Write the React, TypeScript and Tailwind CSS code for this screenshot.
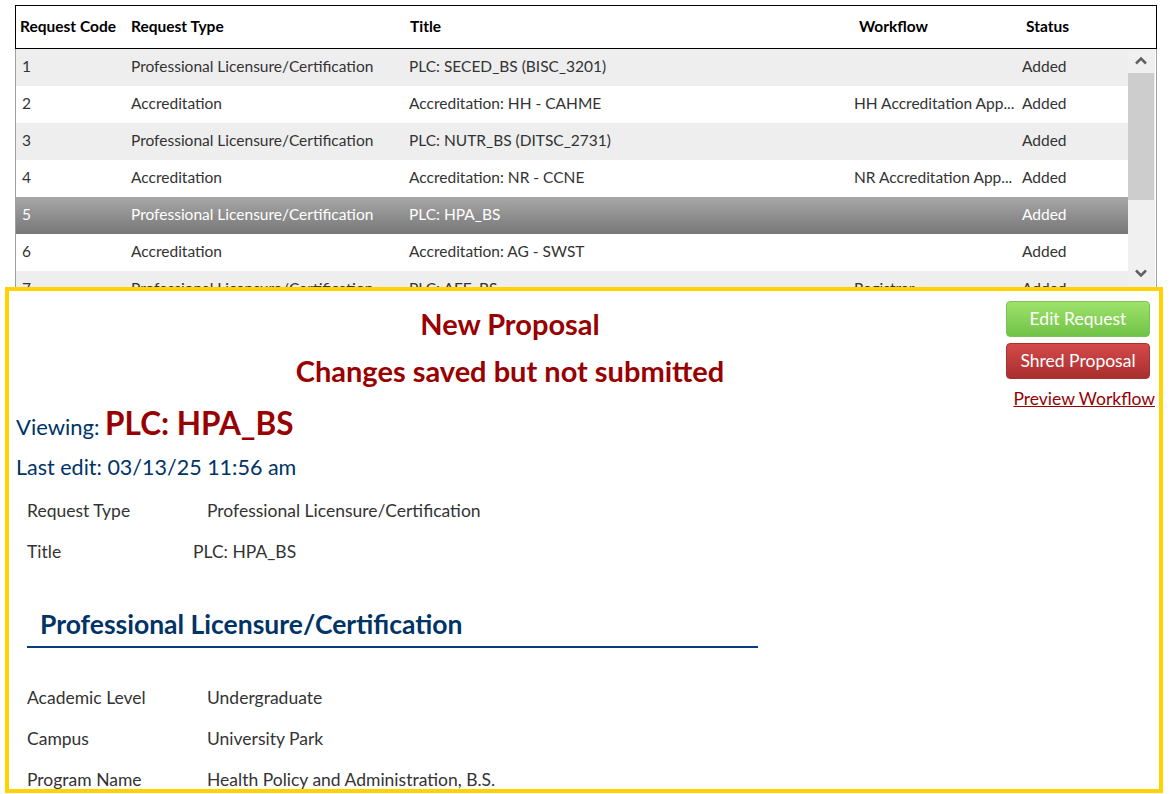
import React from "react";

type Row = { code: string; type: string; title: string; workflow: string; status: string };

const rows: Row[] = [
  { code: "1", type: "Professional Licensure/Certification", title: "PLC: SECED_BS (BISC_3201)", workflow: "", status: "Added" },
  { code: "2", type: "Accreditation", title: "Accreditation: HH - CAHME", workflow: "HH Accreditation App...", status: "Added" },
  { code: "3", type: "Professional Licensure/Certification", title: "PLC: NUTR_BS (DITSC_2731)", workflow: "", status: "Added" },
  { code: "4", type: "Accreditation", title: "Accreditation: NR - CCNE", workflow: "NR Accreditation App...", status: "Added" },
  { code: "5", type: "Professional Licensure/Certification", title: "PLC: HPA_BS", workflow: "", status: "Added" },
  { code: "6", type: "Accreditation", title: "Accreditation: AG - SWST", workflow: "", status: "Added" },
  { code: "7", type: "Professional Licensure/Certification", title: "PLC: AEE_BS", workflow: "Registrar...", status: "Added" },
];

const font = { fontFamily: "Lato, 'Open Sans', sans-serif" };

function Field({ label, value, valueClass = "pl-[180px]" }: { label: string; value: string; valueClass?: string }) {
  return (
    <div className="flex h-[41px] items-center pl-[18px] text-[17.5px] text-[#333333]">
      <div className="w-0 whitespace-nowrap">{label}</div>
      <div className={valueClass + " whitespace-nowrap"}>{value}</div>
    </div>
  );
}

export default function App() {
  return (
    <div className="h-[794px] w-[1172px] overflow-hidden bg-white" style={font}>
      {/* Table */}
      <div className="ml-[15px] pt-[5px]">
        <div className="h-[282px] w-[1142px] overflow-hidden">
          <div className="flex h-[44px] items-center border border-black bg-white text-[15.5px] font-bold text-black">
            <div className="w-[111px] pl-[4px]">Request Code</div>
            <div className="w-[279px] pl-[4px]">Request Type</div>
            <div className="w-[447px] pl-[4px]">Title</div>
            <div className="w-[167px] pl-[6px]">Workflow</div>
            <div className="w-[111px] pl-[6px]">Status</div>
          </div>
          <div className="flex border-x border-[#a0a0a0]">
            <div className="w-[1112px]">
              {rows.map((r, i) => {
                const sel = r.code === "5";
                const bg = sel ? "bg-gradient-to-b from-[#a8a8a8] to-[#777777] text-white" : i % 2 === 0 ? "bg-[#eeeeee] text-[#333333]" : "bg-white text-[#333333]";
                return (
                  <div key={r.code} className={"flex h-[37px] items-center pb-[2px] text-[15.5px] " + bg}>
                    <div className="w-[111px] pl-[6px]">{r.code}</div>
                    <div className="w-[279px] pl-[4px] whitespace-nowrap">{r.type}</div>
                    <div className="w-[445px] pl-[3px] whitespace-nowrap">{r.title}</div>
                    <div className="w-[167px] pl-[3px] whitespace-nowrap">{r.workflow}</div>
                    <div className="w-[110px] pl-[4px]">{r.status}</div>
                  </div>
                );
              })}
            </div>
            <div className="relative w-[27px] bg-[#f0f0f0]">
              <svg className="absolute left-[7px] top-[7px]" width="12" height="9" viewBox="0 0 12 9">
                <path d="M1 7.5 L6 2.5 L11 7.5" fill="none" stroke="#606060" strokeWidth="2.5" />
              </svg>
              <div className="absolute left-0 top-[24px] h-[127px] w-[26px] bg-[#cdcdcd]" />
              <svg className="absolute left-[7px] top-[220px]" width="12" height="9" viewBox="0 0 12 9">
                <path d="M1 1.5 L6 6.5 L11 1.5" fill="none" stroke="#606060" strokeWidth="2.5" />
              </svg>
            </div>
          </div>
        </div>
      </div>

      {/* Detail panel */}
      <div className="ml-[5px] h-[506px] w-[1158px] border-[4px] border-[#ffd200] bg-white">
        <div className="flex">
          <div className="flex-1 pl-[12px]">
            <div className="flex flex-col items-center pt-[9px] text-[29px] font-bold leading-[47px] text-[#990000]">
              <div>New Proposal</div>
              <div>Changes saved but not submitted</div>
            </div>
          </div>
          <div className="flex w-[160px] flex-col items-end pr-[4px] pt-[10px]">
            <button className="mr-[5px] h-[36px] w-[144px] rounded-[4px] border border-[#7cc255] bg-gradient-to-b from-[#9ee26a] to-[#70c346] text-[17.5px] text-white">
              Edit Request
            </button>
            <button className="mr-[5px] mt-[6px] h-[36px] w-[144px] rounded-[4px] border border-[#a83232] bg-gradient-to-b from-[#d44a4a] to-[#a92e2e] text-[17.5px] text-white">
              Shred Proposal
            </button>
            <a className="mt-[7px] text-[17.5px] text-[#990000] underline">Preview Workflow</a>
          </div>
        </div>
        <div className="-mt-[12px] flex items-baseline pl-[7px] text-[#003366]">
          <span className="text-[22px]">Viewing:&nbsp;</span>
          <span className="text-[31.5px] font-bold text-[#990000]">PLC: HPA_BS</span>
        </div>
        <div className="mt-[3px] pl-[7px] text-[21.5px] text-[#003366]">Last edit: 03/13/25 11:56 am</div>
        <div className="mt-[8px]">
          <Field label="Request Type" value="Professional Licensure/Certification" />
          <Field label="Title" value="PLC: HPA_BS" valueClass="pl-[166px]" />
        </div>
        <div className="ml-[18px] mt-[32px] w-[731px] border-b-2 border-[#003f7f] pb-[1px] pl-[13px] text-[26.5px] font-bold text-[#003366]">
          Professional Licensure/Certification
        </div>
        <div className="mt-[30px]">
          <Field label="Academic Level" value="Undergraduate" />
          <Field label="Campus" value="University Park" />
          <Field label="Program Name" value="Health Policy and Administration, B.S." />
        </div>
      </div>
    </div>
  );
}
